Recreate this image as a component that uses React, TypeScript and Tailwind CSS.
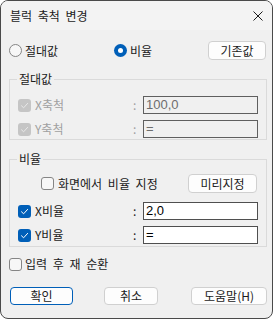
import { ReactNode } from "react";

function CheckMark({ color }: { color: string }) {
  return (
    <svg width="9" height="9" viewBox="0 0 9 9" fill="none">
      <path d="M1.5 4.8 L3.6 6.8 L7.6 2.4" stroke={color} strokeWidth="1" strokeLinecap="round" strokeLinejoin="round" />
    </svg>
  );
}

function Check({ checked, disabled }: { checked?: boolean; disabled?: boolean }) {
  if (checked && disabled) {
    return (
      <span className="w-[13px] h-[13px] shrink-0 rounded-[3px] bg-[#c5c5c5] flex items-center justify-center">
        <CheckMark color="#e8e8e8" />
      </span>
    );
  }
  if (checked) {
    return (
      <span className="w-[13px] h-[13px] shrink-0 rounded-[3px] bg-[#005fb8] flex items-center justify-center">
        <CheckMark color="#ffffff" />
      </span>
    );
  }
  return <span className="w-[13px] h-[13px] shrink-0 rounded-[3px] border border-[#858585] bg-[#f7f7f7]" />;
}

function Radio({ checked, label }: { checked?: boolean; label: string }) {
  return (
    <div className="flex items-center">
      {checked ? (
        <span className="w-[13px] h-[13px] rounded-full bg-[#005fb8] flex items-center justify-center">
          <span className="w-[5px] h-[5px] rounded-full bg-white" />
        </span>
      ) : (
        <span className="w-[13px] h-[13px] rounded-full border border-[#858585] bg-[#f7f7f7]" />
      )}
      <span className="ml-[3px]">{label}</span>
    </div>
  );
}

function Btn({ children, className, primary }: { children: ReactNode; className?: string; primary?: boolean }) {
  return (
    <div
      className={
        "flex items-center justify-center rounded-[4px] bg-[#fdfdfd] border " +
        (primary ? "border-[#005fb8] " : "border-[#d0d0d0] ") +
        (className ?? "")
      }
    >
      {children}
    </div>
  );
}

function ValueRow({
  label,
  value,
  checked,
  disabled,
  className,
}: {
  label: string;
  value: string;
  checked?: boolean;
  disabled?: boolean;
  className?: string;
}) {
  return (
    <div className={"flex items-center h-[18px] pl-[8px] " + (className ?? "")}>
      <div className="w-[115px] flex items-center">
        <Check checked={checked} disabled={disabled} />
        <span className={"ml-[4px] " + (disabled ? "text-[#a0a0a0]" : "")}>{label}</span>
      </div>
      <span className={"w-[10px] " + (disabled ? "text-[#a0a0a0]" : "")}>:</span>
      <div
        className={
          "w-[115px] h-[18px] border flex items-center pl-[2px] font-['Liberation_Sans_Narrow','Liberation_Sans',sans-serif] text-[13px] " +
          (disabled ? "border-[#5f5f5f] bg-[#f0f0f0] text-[#6d6d6d]" : "border-[#4f4f4f] bg-white text-black")
        }
      >
        {value}
      </div>
    </div>
  );
}

export default function App() {
  return (
    <div className="w-[274px] h-[319px] bg-white font-['Noto_Sans_CJK_KR',sans-serif] text-[12px] leading-[16px] text-[#1b1b1b] [word-spacing:3px]">
      <div className="w-[273px] h-[319px] border border-[#4a4a4a] rounded-[8px] overflow-hidden flex flex-col bg-[#f0f0f0]">
        <div className="h-[29px] shrink-0 bg-[#f3f3f3] flex items-center pl-[9px] pr-[9px]">
          <span>블럭 축척 변경</span>
          <svg className="ml-auto" width="10" height="10" viewBox="0 0 10 10">
            <path d="M0.5 0.5 L9.5 9.5 M9.5 0.5 L0.5 9.5" stroke="#1b1b1b" strokeWidth="1" />
          </svg>
        </div>

        <div className="flex-1 pl-[8px] pr-[5px]">
          <div className="mt-[11px] h-[19px] flex items-center">
            <div className="w-[105px]">
              <Radio label="절대값" />
            </div>
            <Radio checked label="비율" />
            <Btn className="ml-auto mr-[1px] w-[58px] h-[19px]">기존값</Btn>
          </div>

          <fieldset className="mt-[11px] border border-[#dadada] pb-[1px]">
            <legend className="ml-[7px] px-[2px] leading-[16px]">절대값</legend>
            <ValueRow className="mt-[9px]" label="X축척" value="100,0" checked disabled />
            <ValueRow className="mt-[6px]" label="Y축척" value="=" checked disabled />
          </fieldset>

          <fieldset className="mt-[11px] border border-[#dadada] pb-[2px]">
            <legend className="ml-[7px] px-[2px] leading-[16px]">비율</legend>
            <div className="mt-[7px] h-[19px] flex items-center pl-[31px]">
              <Check />
              <span className="ml-[4px]">화면에서 비율 지정</span>
              <Btn className="ml-auto mr-[9px] w-[69px] h-[19px]">미리지정</Btn>
            </div>
            <ValueRow className="mt-[9px]" label="X비율" value="2,0" checked />
            <ValueRow className="mt-[6px]" label="Y비율" value="=" checked />
          </fieldset>

          <div className="mt-[9px] h-[16px] flex items-center">
            <Check />
            <span className="ml-[3px]">입력 후 재 순환</span>
          </div>

          <div className="mt-[15px] flex items-center">
            <Btn primary className="ml-[1px] w-[63px] h-[18px]">확인</Btn>
            <Btn className="ml-[31px] w-[54px] h-[18px]">취소</Btn>
            <Btn className="ml-auto w-[76px] h-[18px]">도움말(H)</Btn>
          </div>
        </div>
      </div>
    </div>
  );
}
